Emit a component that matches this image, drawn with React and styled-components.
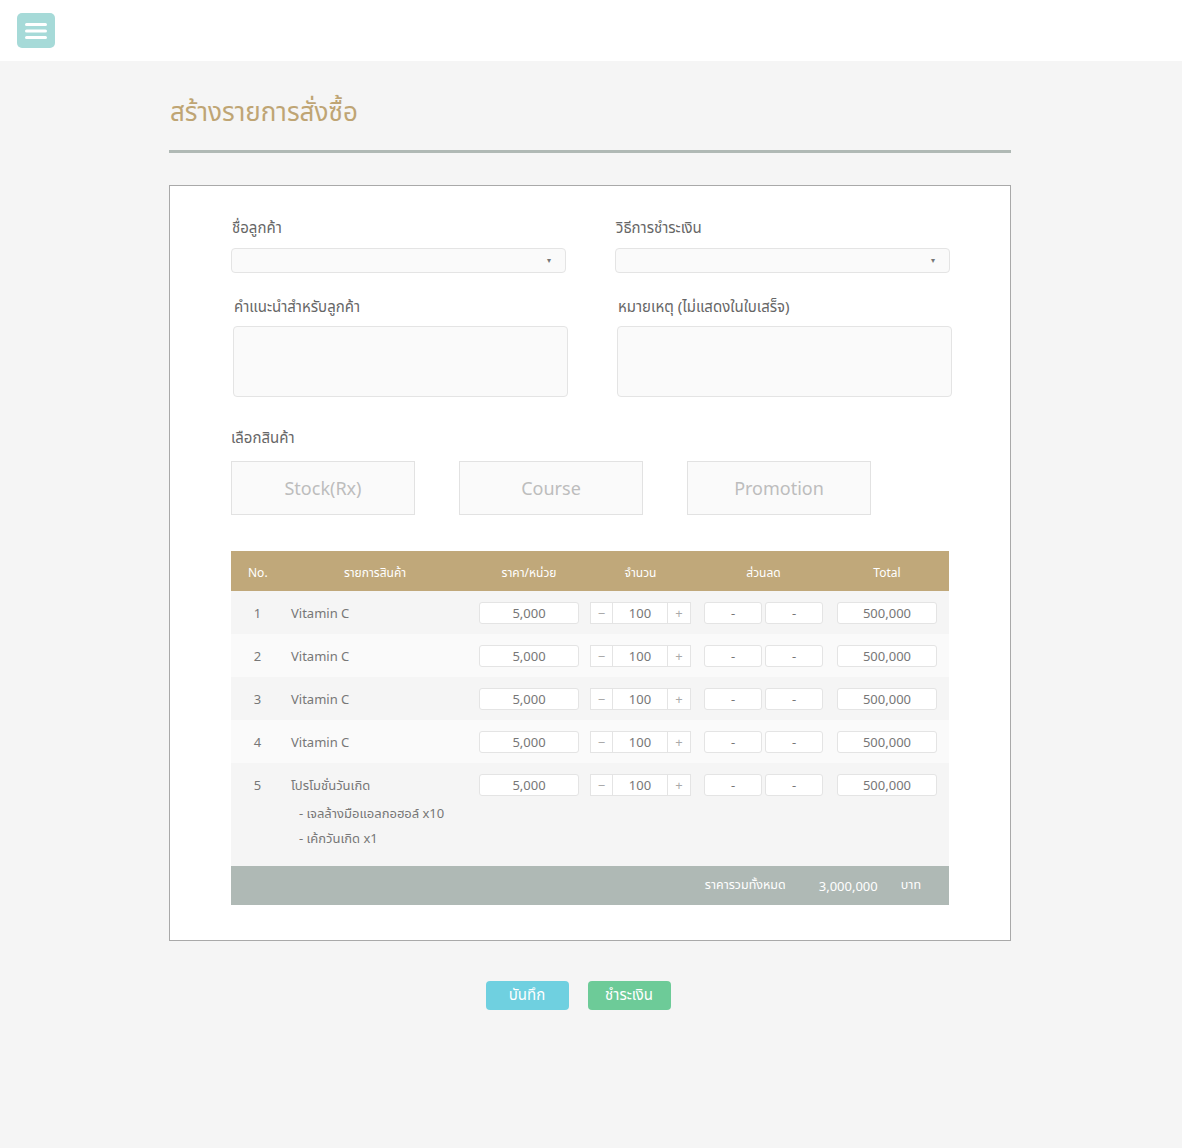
import styled, { createGlobalStyle } from 'styled-components';

const GlobalStyle = createGlobalStyle`
  html, body {
    margin: 0;
    padding: 0;
    background: #f5f5f5;
    font-family: 'Noto Sans', 'Noto Sans Thai', 'DejaVu Sans', sans-serif;
  }
  * { box-sizing: border-box; }
`;

const rows = [
  { no: 1, name: 'Vitamin C' },
  { no: 2, name: 'Vitamin C' },
  { no: 3, name: 'Vitamin C' },
  { no: 4, name: 'Vitamin C' },
  {
    no: 5,
    name: 'โปรโมชั่นวันเกิด',
    items: ['- เจลล้างมือแอลกอฮอล์ x10', '- เค้กวันเกิด x1'],
  },
];

// column widths include the trailing space after each input
const columns = '52px 196px 111px 114px 133px 112px';

function MenuIcon() {
  return (
    <svg width="22" height="18" viewBox="0 0 22 18">
      <rect x="0" y="1" width="22" height="3" rx="1.5" fill="#fff" />
      <rect x="0" y="7.5" width="22" height="3" rx="1.5" fill="#fff" />
      <rect x="0" y="14" width="22" height="3" rx="1.5" fill="#fff" />
    </svg>
  );
}

export default function App() {
  return (
    <>
      <GlobalStyle />
      <TopBar>
        <MenuButton>
          <MenuIcon />
        </MenuButton>
      </TopBar>

      <Page>
        <Title>สร้างรายการสั่งซื้อ</Title>
        <Divider />

        <Card>
          <FormGrid>
            <Field>
              <Label>ชื่อลูกค้า</Label>
              <SelectBox>
                <Caret>▾</Caret>
              </SelectBox>
            </Field>
            <Field>
              <Label>วิธีการชำระเงิน</Label>
              <SelectBox>
                <Caret>▾</Caret>
              </SelectBox>
            </Field>
            <Field $shift>
              <Label>คำแนะนำสำหรับลูกค้า</Label>
              <TextArea />
            </Field>
            <Field $shift>
              <Label>หมายเหตุ (ไม่แสดงในใบเสร็จ)</Label>
              <TextArea />
            </Field>
          </FormGrid>

          <SectionLabel>เลือกสินค้า</SectionLabel>
          <ProductTabs>
            <ProductTab>Stock(Rx)</ProductTab>
            <ProductTab>Course</ProductTab>
            <ProductTab>Promotion</ProductTab>
          </ProductTabs>

          <Table>
            <HeadRow>
              <HeadCell $left>No.</HeadCell>
              <HeadCell $trail={12}>รายการสินค้า</HeadCell>
              <HeadCell $trail={11}>ราคา/หน่วย</HeadCell>
              <HeadCell $trail={13}>จำนวน</HeadCell>
              <HeadCell $trail={14}>ส่วนลด</HeadCell>
              <HeadCell $trail={12}>Total</HeadCell>
            </HeadRow>

            {rows.map((row, i) => (
              <Row key={row.no} $alt={i % 2 === 1} $tall={!!row.items}>
                <NoCell>{row.no}</NoCell>
                <NameCell>
                  <NameText>{row.name}</NameText>
                  {row.items && (
                    <SubList>
                      {row.items.map((item) => (
                        <SubItem key={item}>{item}</SubItem>
                      ))}
                    </SubList>
                  )}
                </NameCell>
                <Cell $trail={11}>
                  <Input>5,000</Input>
                </Cell>
                <Cell $trail={13}>
                  <Stepper>
                    <StepButton>−</StepButton>
                    <StepValue>100</StepValue>
                    <StepButton>+</StepButton>
                  </Stepper>
                </Cell>
                <Cell $trail={14}>
                  <Input>-</Input>
                  <Input>-</Input>
                </Cell>
                <Cell $trail={12}>
                  <Input>500,000</Input>
                </Cell>
              </Row>
            ))}

            <FooterRow>
              <FooterText>ราคารวมทั้งหมด</FooterText>
              <FooterAmount>3,000,000</FooterAmount>
              <FooterText>บาท</FooterText>
            </FooterRow>
          </Table>
        </Card>

        <Actions>
          <ActionButton $color="#6fd0e0">บันทึก</ActionButton>
          <ActionButton $color="#6dcb98">ชำระเงิน</ActionButton>
        </Actions>
      </Page>
    </>
  );
}

const TopBar = styled.header`
  height: 61px;
  background: #fff;
  display: flex;
  align-items: center;
  padding-left: 17px;
`;

const MenuButton = styled.button`
  width: 38px;
  height: 35px;
  border: none;
  border-radius: 5px;
  background: #a6dad8;
  display: flex;
  align-items: center;
  justify-content: center;
  padding: 0;
  cursor: pointer;
`;

const Page = styled.main`
  width: 842px;
  margin: 0 auto;
  padding: 33px 0 137px;
  transform: translateX(-1px);
`;

const Title = styled.h1`
  margin: 0;
  font-size: 26px;
  line-height: 34px;
  font-weight: 400;
  color: #bfa574;
  padding-left: 1px;
`;

const Divider = styled.div`
  height: 3px;
  background: #b0b9b5;
  margin-top: 22px;
`;

const Card = styled.section`
  margin-top: 32px;
  background: #fff;
  border: 1px solid #a9a9a9;
  padding: 31px 61px 35px 61px;
`;

const FormGrid = styled.div`
  display: grid;
  grid-template-columns: 335px 335px;
  column-gap: 49px;
  row-gap: 23px;
`;

const Field = styled.div`
  display: flex;
  flex-direction: column;
  width: 335px;
  margin-left: ${({ $shift }) => ($shift ? '2px' : '0')};
`;

const Label = styled.label`
  font-size: 15px;
  line-height: 20px;
  color: #666;
  margin-bottom: 11px;
  padding-left: 1px;
`;

const SelectBox = styled.div`
  position: relative;
  height: 25px;
  background: #fafafa;
  border: 1px solid #e4e4e4;
  border-radius: 4px;
`;

const Caret = styled.span`
  position: absolute;
  right: 14px;
  top: 5px;
  font-size: 8px;
  color: #777;
`;

const TextArea = styled.div`
  height: 71px;
  margin-top: -1px;
  background: #fafafa;
  border: 1px solid #e4e4e4;
  border-radius: 4px;
`;

const SectionLabel = styled.div`
  margin-top: 30px;
  font-size: 15px;
  line-height: 20px;
  color: #666;
`;

const ProductTabs = styled.div`
  display: flex;
  gap: 44px;
  margin-top: 14px;
`;

const ProductTab = styled.button`
  width: 184px;
  height: 54px;
  background: #fafafa;
  border: 1px solid #e2e2e2;
  color: #bdbdbd;
  font-family: inherit;
  font-size: 18px;
  cursor: pointer;
`;

const Table = styled.div`
  margin-top: 36px;
  width: 718px;
`;

const HeadRow = styled.div`
  display: grid;
  grid-template-columns: ${columns};
  height: 40px;
  background: #c0a87a;
  align-items: center;
`;

const HeadCell = styled.div`
  font-size: 12px;
  color: #fff;
  text-align: ${({ $left }) => ($left ? 'left' : 'center')};
  padding-left: ${({ $left }) => ($left ? '17px' : '0')};
  padding-right: ${({ $trail }) => $trail || 0}px;
  padding-top: 3px;
`;

const Row = styled.div`
  display: grid;
  grid-template-columns: ${columns};
  align-items: start;
  background: ${({ $alt }) => ($alt ? '#fafafa' : '#f5f5f5')};
  padding: 11px 0 ${({ $tall }) => ($tall ? '15px' : '10px')};
  min-height: 43px;
`;

const NoCell = styled.div`
  font-size: 13px;
  line-height: 22px;
  color: #777;
  text-align: center;
  padding-left: 1px;
`;

const NameCell = styled.div`
  padding-left: 8px;
  display: flex;
  flex-direction: column;
`;

const NameText = styled.div`
  font-size: 13px;
  line-height: 22px;
  color: #777;
`;

const SubList = styled.div`
  margin-top: 5px;
  padding-left: 8px;
`;

const SubItem = styled.div`
  font-size: 13px;
  line-height: 25px;
  color: #777;
`;

const Cell = styled.div`
  display: flex;
  gap: 3px;
  padding-right: ${({ $trail }) => $trail}px;
`;

const Input = styled.div`
  flex: 1;
  height: 22px;
  background: #fff;
  border: 1px solid #e4e4e4;
  border-radius: 3px;
  font-size: 13px;
  line-height: 20px;
  color: #777;
  text-align: center;
`;

const Stepper = styled.div`
  display: grid;
  grid-template-columns: 21px 1fr 22px;
  width: 100%;
  height: 22px;
  background: #fff;
  border: 1px solid #e4e4e4;
`;

const StepButton = styled.span`
  font-size: 13px;
  line-height: 20px;
  color: #aaa;
  text-align: center;
`;

const StepValue = styled.span`
  font-size: 13px;
  line-height: 20px;
  color: #777;
  text-align: center;
  border-left: 1px solid #e4e4e4;
  border-right: 1px solid #e4e4e4;
`;

const FooterRow = styled.div`
  display: flex;
  justify-content: flex-end;
  align-items: center;
  height: 39px;
  background: #afb9b5;
  padding-right: 28px;
`;

const FooterText = styled.span`
  font-size: 12.5px;
  color: #fff;
`;

const FooterAmount = styled.span`
  font-size: 13px;
  color: #fff;
  margin: 0 23px 0 33px;
`;

const Actions = styled.div`
  display: flex;
  justify-content: center;
  gap: 19px;
  margin-top: 40px;
  padding-right: 24px;
`;

const ActionButton = styled.button`
  width: 83px;
  height: 29px;
  border: none;
  border-radius: 4px;
  background: ${({ $color }) => $color};
  color: #fff;
  font-family: inherit;
  font-size: 15px;
  cursor: pointer;
`;
